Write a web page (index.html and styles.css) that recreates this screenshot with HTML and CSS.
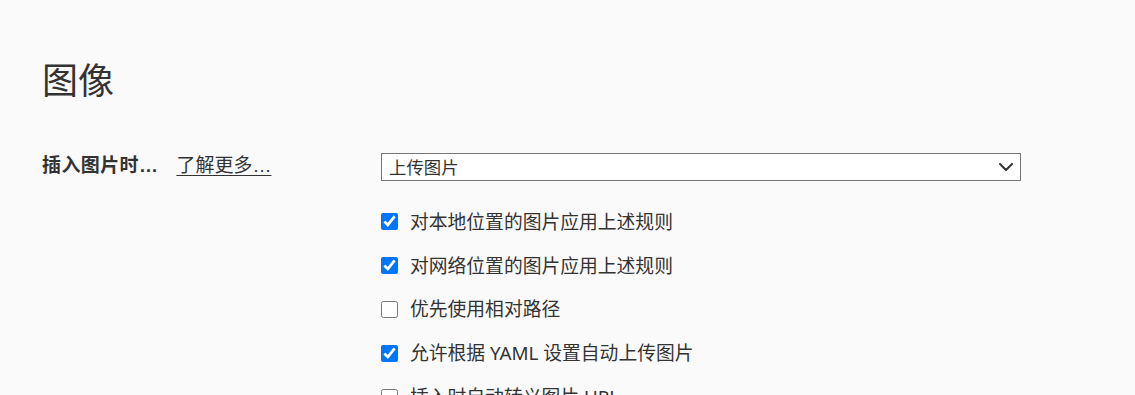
FILE: index.html
```html
<!DOCTYPE html>
<html lang="zh-CN">
<head>
<meta charset="utf-8">
<title>图像</title>
<link rel="stylesheet" href="styles.css">
</head>
<body>
<main class="page">
  <h1 class="title">图像</h1>
  <section class="setting">
    <div class="setting-label">
      <span class="label-strong">插入图片时…</span>
      <a class="learn" href="#">了解更多…</a>
    </div>
    <div class="setting-body">
      <div class="select">
        <span class="select-value">上传图片</span>
        <svg class="chevron" width="14" height="8" viewBox="0 0 14 8"><path d="M1 1 L7 7 L13 1" fill="none" stroke="#333" stroke-width="2" stroke-linecap="round" stroke-linejoin="round"/></svg>
      </div>
      <ul class="options">
        <li class="option"><input type="checkbox" class="check" checked><span class="option-text">对本地位置的图片应用上述规则</span></li>
        <li class="option"><input type="checkbox" class="check" checked><span class="option-text">对网络位置的图片应用上述规则</span></li>
        <li class="option"><input type="checkbox" class="check"><span class="option-text">优先使用相对路径</span></li>
        <li class="option"><input type="checkbox" class="check" checked><span class="option-text">允许根据 YAML 设置自动上传图片</span></li>
        <li class="option"><input type="checkbox" class="check"><span class="option-text">插入时自动转义图片 URL</span></li>
      </ul>
    </div>
  </section>
</main>
</body>
</html>
```

FILE: styles.css
```css
html, body {
  margin: 0;
  padding: 0;
  background: #fafafa;
  overflow: hidden;
}
body {
  font-family: "Noto Sans", "Noto Sans CJK SC", sans-serif;
  color: #333;
}
.page {
  padding: 60px 0 0 42px;
}
.title {
  margin: 0;
  font-family: "Noto Sans CJK SC", sans-serif;
  font-size: 36px;
  line-height: 36px;
  font-weight: 400;
  color: #333;
}
.setting {
  margin-top: 57px;
  display: grid;
  grid-template-columns: 339px 640px;
}
.setting-label {
  display: flex;
  align-items: center;
  gap: 18px;
  height: 28px;
  font-size: 19px;
  line-height: 24px;
  font-family: "Liberation Sans", "Noto Sans CJK SC", sans-serif;
}
.label-strong {
  font-weight: 700;
  letter-spacing: 0.4px;
  position: relative;
  top: -1px;
}
.learn {
  color: #333;
  text-decoration: underline;
  text-underline-offset: 3px;
  text-decoration-thickness: 1px;
  position: relative;
  top: -1px;
}
.select {
  box-sizing: border-box;
  height: 28px;
  border: 1px solid #767676;
  background: #fff;
  display: flex;
  align-items: center;
  justify-content: space-between;
  padding: 0 7px 0 7px;
  font-family: "Noto Sans CJK SC", sans-serif;
  font-size: 17.4px;
}
.select-value {
  line-height: 20px;
}
.chevron {
  display: block;
}
.options {
  list-style: none;
  margin: 19px 0 0 0;
  padding: 0;
}
.option {
  display: flex;
  align-items: center;
  height: 43.8px;
  font-size: 18.8px;
  font-family: "Noto Sans", "Noto Sans CJK SC", sans-serif;
}
.check {
  width: 17px;
  height: 17px;
  margin: 0 12px 0 0;
  accent-color: #0075ff;
}
.option-text {
  line-height: 24px;
}
```
